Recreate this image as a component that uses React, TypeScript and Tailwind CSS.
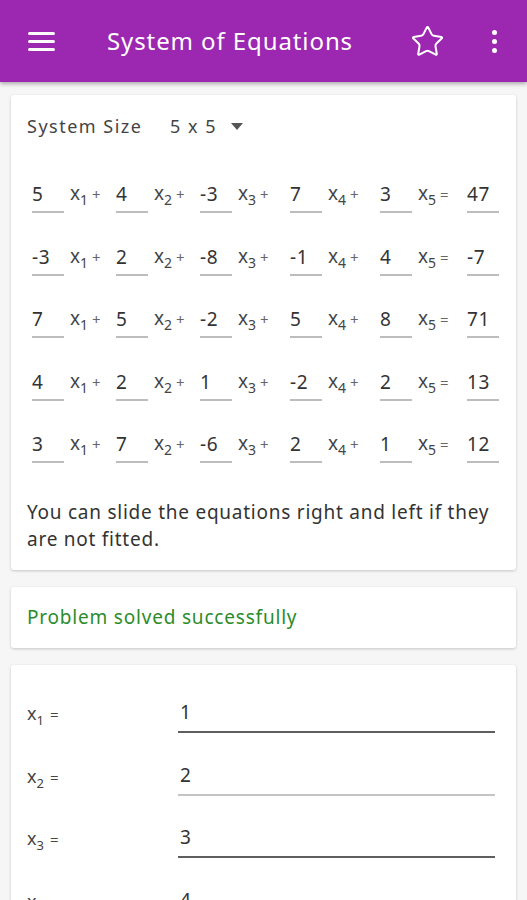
import { Star } from 'lucide-react';

const rows = [
  { coefs: ['5', '4', '-3', '7', '3'], rhs: '47' },
  { coefs: ['-3', '2', '-8', '-1', '4'], rhs: '-7' },
  { coefs: ['7', '5', '-2', '5', '8'], rhs: '71' },
  { coefs: ['4', '2', '1', '-2', '2'], rhs: '13' },
  { coefs: ['3', '7', '-6', '2', '1'], rhs: '12' },
];

// label areas after each input (x_i + / x_5 =)
const labelWidths = ['w-[52px]', 'w-[52px]', 'w-[58px]', 'w-[58px]', 'w-[55px]'];

const results = [
  { value: '1', line: 'border-[#5f5f5f]' },
  { value: '2', line: 'border-[#c4c4c4]' },
  { value: '3', line: 'border-[#5f5f5f]' },
  { value: '4', line: 'border-[#5f5f5f]' },
];

function Cell({ value }: { value: string }) {
  return (
    <div className="w-[32px] h-[36px] flex items-end pb-[7px] border-b-2 border-[#bdbdbd] text-[19px] tracking-[0.6px] leading-none text-[#333]">
      {value}
    </div>
  );
}

function Variable({ index, sign }: { index: number; sign: string }) {
  return (
    <span className="text-[19px] leading-none text-[#444]">
      x<sub className="text-[14px] relative top-[5px]">{index}</sub>
      <span className="text-[15px] ml-[4px] text-[#666]">{sign}</span>
    </span>
  );
}

export default function App() {
  return (
    <div
      className="w-[527px] h-[900px] overflow-hidden bg-[#f6f6f6]"
      style={{ fontFamily: '"Noto Sans", "Open Sans", sans-serif' }}
    >
      <header className="h-[82px] bg-[#9c27b0] flex items-center text-white shadow-[0_2px_4px_rgba(0,0,0,0.3)] relative z-10">
        <div className="w-[107px] pl-[28px]">
          <div className="w-[27px] flex flex-col gap-[5px]">
            <span className="h-[3px] bg-white rounded-sm" />
            <span className="h-[3px] bg-white rounded-sm" />
            <span className="h-[3px] bg-white rounded-sm" />
          </div>
        </div>
        <h1 className="flex-1 text-[24px] tracking-[0.9px]">System of Equations</h1>
        <Star className="w-[35px] h-[35px] mr-[47px]" strokeWidth={1.4} />
        <div className="flex flex-col gap-[4px] items-center mr-[30px]">
          <span className="w-[5px] h-[5px] rounded-full bg-white" />
          <span className="w-[5px] h-[5px] rounded-full bg-white" />
          <span className="w-[5px] h-[5px] rounded-full bg-white" />
        </div>
      </header>

      <main className="px-[11px] pt-[13px] flex flex-col gap-[17px]">
        <section className="bg-white rounded-[3px] shadow-[0_1px_3px_rgba(0,0,0,0.2)] pl-[16px] pr-[14px] pt-[18px] pb-[17px]">
          <div className="flex items-center h-[26px] text-[18px] tracking-[1.5px] text-[#444]">
            <span className="w-[143px]">System Size</span>
            <span className="tracking-[1.5px]">5 x 5</span>
            <svg viewBox="0 0 12 7" className="w-[12px] h-[7px] ml-[14px]">
              <path d="M0 0 L12 0 L6 7 Z" fill="#555" />
            </svg>
          </div>

          <div className="mt-[30px] pl-[5px]">
            {rows.map((row, r) => (
              <div key={r} className="flex items-end h-[62.5px] first:h-[44px]">
                {row.coefs.map((c, i) => (
                  <div key={i} className="flex items-end">
                    <Cell value={c} />
                    <div className={`${labelWidths[i]} h-[36px] flex items-end pb-[10px] pl-[6px]`}>
                      <Variable index={i + 1} sign={i === 4 ? '=' : '+'} />
                    </div>
                  </div>
                ))}
                <Cell value={row.rhs} />
              </div>
            ))}
          </div>

          <p className="mt-[36px] text-[19px] tracking-[0.75px] leading-[27px] text-[#333]">
            You can slide the equations right and left if they are not fitted.
          </p>
        </section>

        <section className="bg-white rounded-[3px] shadow-[0_1px_3px_rgba(0,0,0,0.2)] px-[16px] h-[61px] flex items-center">
          <span className="text-[19px] tracking-[0.8px] text-[#2b8c2b]">Problem solved successfully</span>
        </section>

        <section className="bg-white rounded-[3px] shadow-[0_1px_3px_rgba(0,0,0,0.2)] pl-[16px] pr-[21px] pt-[28px] h-[300px]">
          {results.map((res, i) => (
            <div key={i} className="flex items-end h-[62.5px] first:h-[40px]">
              <div className="w-[151px] pb-[11px] text-[18px] leading-none text-[#444]">
                x<sub className="text-[13px] relative top-[5px]">{i + 1}</sub>
                <span className="ml-[6px] text-[15px]">=</span>
              </div>
              <div className={`flex-1 h-[36px] flex items-end pb-[9px] pl-[2px] border-b-2 ${res.line} text-[19px] leading-none text-[#333]`}>
                {res.value}
              </div>
            </div>
          ))}
        </section>
      </main>
    </div>
  );
}
